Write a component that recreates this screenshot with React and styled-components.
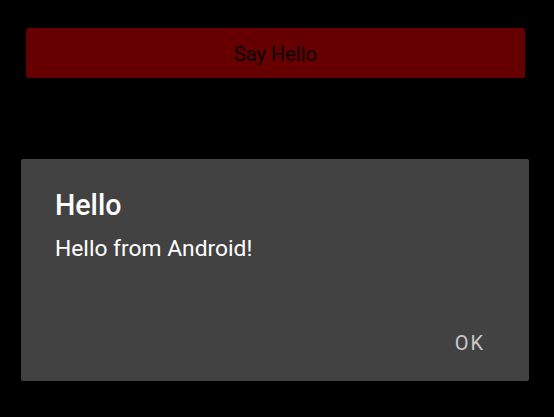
import React from "react";
import styled, { createGlobalStyle } from "styled-components";

const GlobalStyle = createGlobalStyle`
  html, body {
    margin: 0;
    background: #000;
  }
  body {
    font-family: Roboto, "Liberation Sans", sans-serif;
  }
`;

const Screen = styled.div`
  width: 554px;
  height: 417px;
  background: #000;
  box-sizing: border-box;
  padding: 28px 0 0 21px;
  display: flex;
  flex-direction: column;
`;

const HelloButton = styled.button`
  margin-left: 5px;
  width: 499px;
  height: 50px;
  border: none;
  border-radius: 3px;
  background: #660000;
  color: #0a0000;
  font-family: Roboto, "Liberation Sans", sans-serif;
  font-size: 20px;
  padding: 2px 0 0;
`;

const Dialog = styled.div`
  margin-top: 81px;
  width: 508px;
  height: 222px;
  background: #424242;
  border-radius: 2px;
  box-sizing: border-box;
  padding: 29px 34px 26px 34px;
  display: flex;
  flex-direction: column;
`;

const Title = styled.div`
  color: #fff;
  font-size: 28.6px;
  font-weight: 500;
  line-height: 34px;
`;

const Message = styled.div`
  margin-top: 13px;
  color: #fff;
  font-size: 22.8px;
  line-height: 28px;
`;

const Actions = styled.div`
  margin-top: auto;
  display: flex;
  justify-content: flex-end;
  padding-right: 10px;
`;

const ActionButton = styled.button`
  background: none;
  border: none;
  color: #c8c8c8;
  font-family: Roboto, "Liberation Sans", sans-serif;
  font-size: 20px;
  line-height: 24px;
  font-weight: 400;
  letter-spacing: 2px;
  padding: 0;
`;

const App = () => {
  return (
    <>
      <GlobalStyle />
      <Screen>
        <HelloButton>Say Hello</HelloButton>
        <Dialog>
          <Title>Hello</Title>
          <Message>Hello from Android!</Message>
          <Actions>
            <ActionButton>OK</ActionButton>
          </Actions>
        </Dialog>
      </Screen>
    </>
  );
};

export default App;
